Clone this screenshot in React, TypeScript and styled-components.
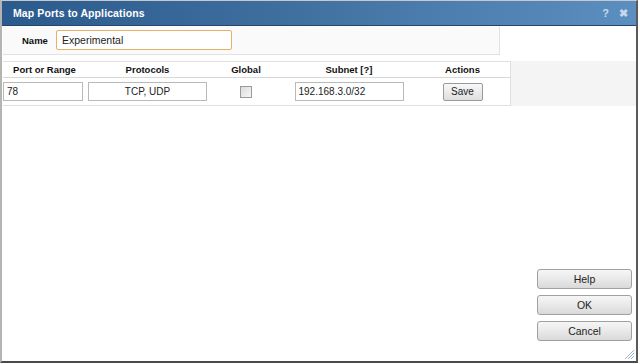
import styled, { createGlobalStyle } from 'styled-components';

const GlobalStyle = createGlobalStyle`
  html, body {
    margin: 0;
    padding: 0;
    background: #ffffff;
  }
  body {
    font-family: "Liberation Sans", Arial, sans-serif;
  }
`;

const DialogStyle = styled.div`
  display: flex;
  flex-direction: column;
  width: 638px;
  height: 363px;
  box-sizing: border-box;
  border-left: 2px solid #b4b4b4;
  border-right: 2px solid #5a5a5a;
  border-bottom: 2px solid #4a4a4a;
  border-top: 1px solid #c8c8c8;
  background: #ffffff;
`;

const TitleBarStyle = styled.div`
  display: flex;
  align-items: center;
  height: 24px;
  padding: 0 8px 0 11px;
  background: linear-gradient(to right, #2b5a8d 0%, #3f6f9f 45%, #5b8fc0 100%);
  border-bottom: 1px solid #24476e;
  color: #ffffff;
`;

const TitleTextStyle = styled.div`
  flex: 1;
  font-size: 10.5px;
  font-weight: bold;
  letter-spacing: 0.1px;
`;

const TitleIconStyle = styled.span`
  margin-left: 10px;
  font-size: 11px;
  font-weight: bold;
  color: #c6d8ec;
`;

const BodyStyle = styled.div`
  position: relative;
  display: flex;
  flex-direction: column;
  flex: 1;
  padding-left: 1px;
`;

const NameSectionStyle = styled.div`
  display: flex;
  align-items: center;
  width: 497px;
  height: 29px;
  box-sizing: border-box;
  padding-left: 19px;
  background: #fafafa;
  border-right: 1px solid #e2e2e2;
  border-bottom: 1px solid #e2e2e2;
`;

const NameLabelStyle = styled.label`
  width: 34px;
  font-size: 9.5px;
  font-weight: bold;
  color: #111111;
`;

const NameInputStyle = styled.div`
  display: flex;
  align-items: center;
  width: 176px;
  height: 20px;
  box-sizing: border-box;
  padding-left: 5px;
  background: #ffffff;
  border: 1px solid #e4b266;
  border-radius: 2px;
  font-size: 10.5px;
  color: #222222;
`;

const TableAreaStyle = styled.div`
  display: flex;
  margin-top: 6px;
  background: #f4f4f4;
`;

const TableStyle = styled.div`
  display: grid;
  grid-template-columns: 83px 123px 74px 132px 95px;
  width: 507px;
  background: #ffffff;
  border-top: 1px solid #e0e0e0;
  border-bottom: 1px solid #e0e0e0;
  border-right: 1px solid #e0e0e0;
`;

const HeaderCellStyle = styled.div`
  display: flex;
  align-items: center;
  justify-content: center;
  height: 15px;
  border-bottom: 1px solid #d8d8d8;
  font-size: 9.5px;
  font-weight: bold;
  color: #111111;
`;

const CellStyle = styled.div<{ $align?: string }>`
  display: flex;
  align-items: center;
  justify-content: ${(p) => p.$align || 'center'};
  height: 27px;
`;

const FieldStyle = styled.div<{ $width: number; $center?: boolean }>`
  display: flex;
  align-items: center;
  justify-content: ${(p) => (p.$center ? 'center' : 'flex-start')};
  width: ${(p) => p.$width}px;
  height: 19px;
  box-sizing: border-box;
  padding-left: ${(p) => (p.$center ? 0 : 3)}px;
  background: #ffffff;
  border: 1px solid #b9b9b9;
  font-size: 10px;
  color: #222222;
`;

const CheckboxStyle = styled.div`
  width: 10px;
  height: 10px;
  border: 1px solid #9a9a9a;
  background: linear-gradient(to bottom right, #dcdcdc, #f6f6f6);
`;

const SmallButtonStyle = styled.div`
  display: flex;
  align-items: center;
  justify-content: center;
  width: 40px;
  height: 18px;
  box-sizing: border-box;
  border: 1px solid #9a9a9a;
  border-radius: 2px;
  background: linear-gradient(to bottom, #f8f8f8, #dedede);
  font-size: 10px;
  color: #222222;
`;

const ButtonColumnStyle = styled.div`
  display: flex;
  flex-direction: column;
  gap: 6px;
  margin-top: auto;
  margin-bottom: 20px;
  margin-left: auto;
  margin-right: 4px;
`;

const DialogButtonStyle = styled.div`
  display: flex;
  align-items: center;
  justify-content: center;
  width: 95px;
  height: 20px;
  box-sizing: border-box;
  border: 1px solid #a0a0a0;
  border-radius: 3px;
  background: linear-gradient(to bottom, #f6f6f6 0%, #e9e9e9 50%, #d9d9d9 100%);
  font-size: 10.5px;
  color: #222222;
`;

const GripStyle = styled.svg`
  position: absolute;
  right: 1px;
  bottom: 1px;
`;

const headers = ['Port or Range', 'Protocols', 'Global', 'Subnet [?]', 'Actions'];

const App = () => {
  return (
    <>
      <GlobalStyle />
      <DialogStyle>
        <TitleBarStyle>
          <TitleTextStyle>Map Ports to Applications</TitleTextStyle>
          <TitleIconStyle>?</TitleIconStyle>
          <TitleIconStyle>✖</TitleIconStyle>
        </TitleBarStyle>
        <BodyStyle>
          <NameSectionStyle>
            <NameLabelStyle>Name</NameLabelStyle>
            <NameInputStyle>Experimental</NameInputStyle>
          </NameSectionStyle>
          <TableAreaStyle>
            <TableStyle>
              {headers.map((h) => (
                <HeaderCellStyle key={h}>{h}</HeaderCellStyle>
              ))}
              <CellStyle $align="flex-start">
                <FieldStyle $width={80}>78</FieldStyle>
              </CellStyle>
              <CellStyle>
                <FieldStyle $width={119} $center>TCP, UDP</FieldStyle>
              </CellStyle>
              <CellStyle>
                <CheckboxStyle />
              </CellStyle>
              <CellStyle>
                <FieldStyle $width={109}>192.168.3.0/32</FieldStyle>
              </CellStyle>
              <CellStyle>
                <SmallButtonStyle>Save</SmallButtonStyle>
              </CellStyle>
            </TableStyle>
          </TableAreaStyle>
          <ButtonColumnStyle>
            <DialogButtonStyle>Help</DialogButtonStyle>
            <DialogButtonStyle>OK</DialogButtonStyle>
            <DialogButtonStyle>Cancel</DialogButtonStyle>
          </ButtonColumnStyle>
          <GripStyle width="11" height="11" viewBox="0 0 11 11">
            <path d="M10 1 L1 10 M10 4 L4 10 M10 7 L7 10" stroke="#9bb3cc" strokeWidth="1" />
          </GripStyle>
        </BodyStyle>
      </DialogStyle>
    </>
  );
};

export default App;
